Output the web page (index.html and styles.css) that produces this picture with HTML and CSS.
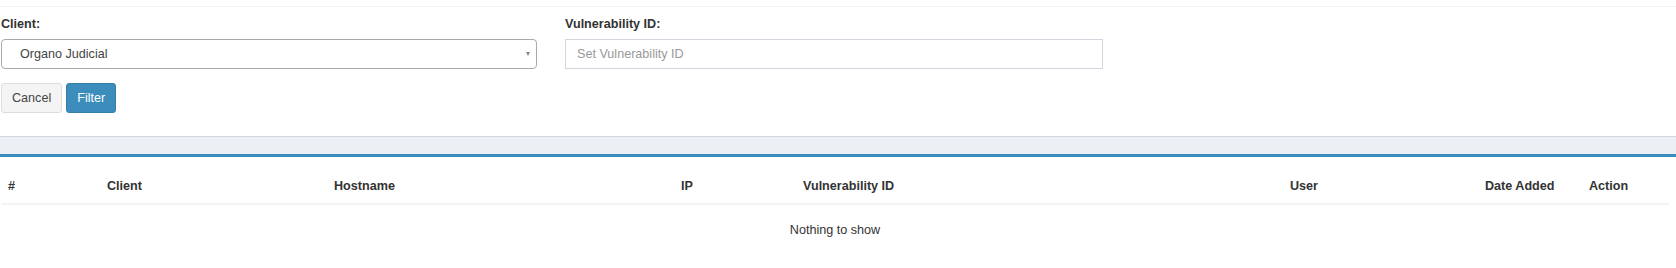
FILE: index.html
```html
<!DOCTYPE html>
<html lang="en">
<head>
    <meta charset="UTF-8">
    <meta name="viewport" content="width=device-width, initial-scale=1.0">
    <title>Vulnerability Exceptions</title>
    <link rel="stylesheet" href="styles.css">
</head>
<body>
    <div class="top-rule"></div>

    <form class="filters">
        <div class="filter-row">
            <div class="form-group">
                <label>Client:</label>
                <div class="select-box">
                    <span class="select-value">Organo Judicial</span>
                    <span class="select-arrow"></span>
                </div>
            </div>
            <div class="form-group">
                <label for="vulnId">Vulnerability ID:</label>
                <input type="text" id="vulnId" placeholder="Set Vulnerability ID">
            </div>
        </div>

        <div class="actions">
            <button type="button" class="btn btn-default">Cancel</button>
            <button type="button" class="btn btn-primary">Filter</button>
        </div>
    </form>

    <div class="content-band"></div>

    <div class="box">
        <table class="data-table">
            <colgroup>
                <col style="width: 99px">
                <col style="width: 227px">
                <col style="width: 347px">
                <col style="width: 122px">
                <col style="width: 487px">
                <col style="width: 195px">
                <col style="width: 104px">
                <col style="width: 87px">
            </colgroup>
            <thead>
                <tr>
                    <th>#</th>
                    <th>Client</th>
                    <th>Hostname</th>
                    <th>IP</th>
                    <th>Vulnerability ID</th>
                    <th>User</th>
                    <th>Date Added</th>
                    <th>Action</th>
                </tr>
            </thead>
            <tbody>
                <tr>
                    <td class="empty" colspan="8">Nothing to show</td>
                </tr>
            </tbody>
        </table>
    </div>
</body>
</html>
```

FILE: styles.css
```css
body {
    margin: 0;
    font-family: 'Liberation Sans', Arial, sans-serif;
    font-size: 12.6px;
    line-height: 18px;
    color: #333;
    background-color: #fff;
}

.top-rule {
    height: 6px;
    border-bottom: 1px solid #f4f4f4;
}

.filters {
    margin: 0;
    padding: 8px 0 0 1px;
}

.filter-row {
    display: grid;
    grid-template-columns: 536px 538px;
    column-gap: 28px;
}

.form-group {
    margin-bottom: 14px;
}

label {
    display: block;
    font-weight: bold;
    margin-bottom: 6px;
}

.select-box {
    display: flex;
    align-items: center;
    justify-content: space-between;
    height: 30px;
    box-sizing: border-box;
    padding: 0 6px 0 18px;
    border: 1px solid #aaa;
    border-radius: 4px;
    color: #444;
}

.select-arrow {
    width: 0;
    height: 0;
    border-top: 4px solid #888;
    border-left: 2.5px solid transparent;
    border-right: 2.5px solid transparent;
}

input {
    display: block;
    width: 100%;
    height: 30px;
    box-sizing: border-box;
    padding: 0 11px;
    border: 1px solid #d2d6de;
    border-radius: 0;
    font-family: inherit;
    font-size: 12.6px;
    color: #555;
    outline: none;
}

input::placeholder {
    color: #999;
}

.actions {
    display: flex;
    gap: 4px;
}

.btn {
    height: 30px;
    padding: 0 10px;
    border: 1px solid transparent;
    border-radius: 3px;
    font-family: inherit;
    font-size: 12.6px;
    cursor: pointer;
}

.btn-default {
    background-color: #f4f4f4;
    border-color: #ddd;
    color: #444;
}

.btn-primary {
    background-color: #3c8dbc;
    border-color: #367fa9;
    color: #fff;
}

.content-band {
    margin-top: 23px;
    height: 17px;
    background-color: #ecf0f5;
    border-top: 1px solid #d2d6de;
}

.box {
    border-top: 3px solid #3c8dbc;
    padding: 12px 0 20px 1px;
}

.data-table {
    width: 1668px;
    table-layout: fixed;
    border-collapse: collapse;
}

.data-table th {
    text-align: left;
    font-weight: bold;
    padding: 8px 7px;
    border-bottom: 2px solid #f4f4f4;
}

.data-table td {
    padding: 16px 7px 8px;
}

.data-table td.empty {
    text-align: center;
}
```
